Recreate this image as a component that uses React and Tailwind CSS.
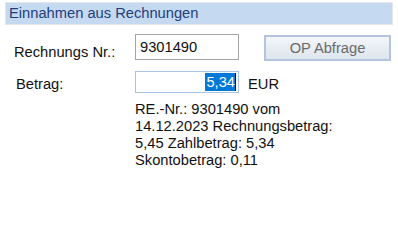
export default function App() {
  return (
    <div className="w-[398px] h-[228px] bg-white overflow-hidden text-[14.7px] leading-none text-[#111] font-['Liberation_Sans',Arial,sans-serif]">
      {/* Kopfzeile */}
      <div className="mx-[5px] mt-[2px] h-[23px] border border-[#e4e6ea] bg-[#c5d9f0] pl-[3px] flex items-center text-[#1f3f7c]">
        Einnahmen aus Rechnungen
      </div>

      <div className="mt-[9px] flex items-start">
        <div className="w-[135px] pl-[14px] pt-[11px]">Rechnungs Nr.:</div>
        <div className="w-[104px] h-[26px] border border-[#a4a4a4] flex items-center px-[4px]">9301490</div>
        <button className="ml-[25px] mt-[1px] w-[127px] h-[26px] border-2 border-[#b3c5de] bg-gradient-to-b from-[#f4f6f9] via-[#e8edf3] to-[#dfe5ed] text-[#6a6a6a] flex items-center justify-center">
          OP Abfrage
        </button>
      </div>

      <div className="mt-[10px] flex items-start">
        <div className="w-[135px] pl-[16px] pt-[6px]">Betrag:</div>
        <div className="w-[104px] h-[22px] border border-[#a9c6e8] flex items-center justify-end pr-[2px]">
          <span className="bg-[#0078d7] text-white h-[18px] flex items-center pl-[1px]">5,34</span>
          <span className="w-px h-[18px] bg-black" />
        </div>
        <div className="ml-[9px] pt-[6px]">EUR</div>
      </div>

      <div className="mt-[8px] pl-[135px] leading-[17px]">
        <div>RE.-Nr.: 9301490 vom</div>
        <div>14.12.2023 Rechnungsbetrag:</div>
        <div>5,45 Zahlbetrag: 5,34</div>
        <div>Skontobetrag: 0,11</div>
      </div>
    </div>
  )
}
